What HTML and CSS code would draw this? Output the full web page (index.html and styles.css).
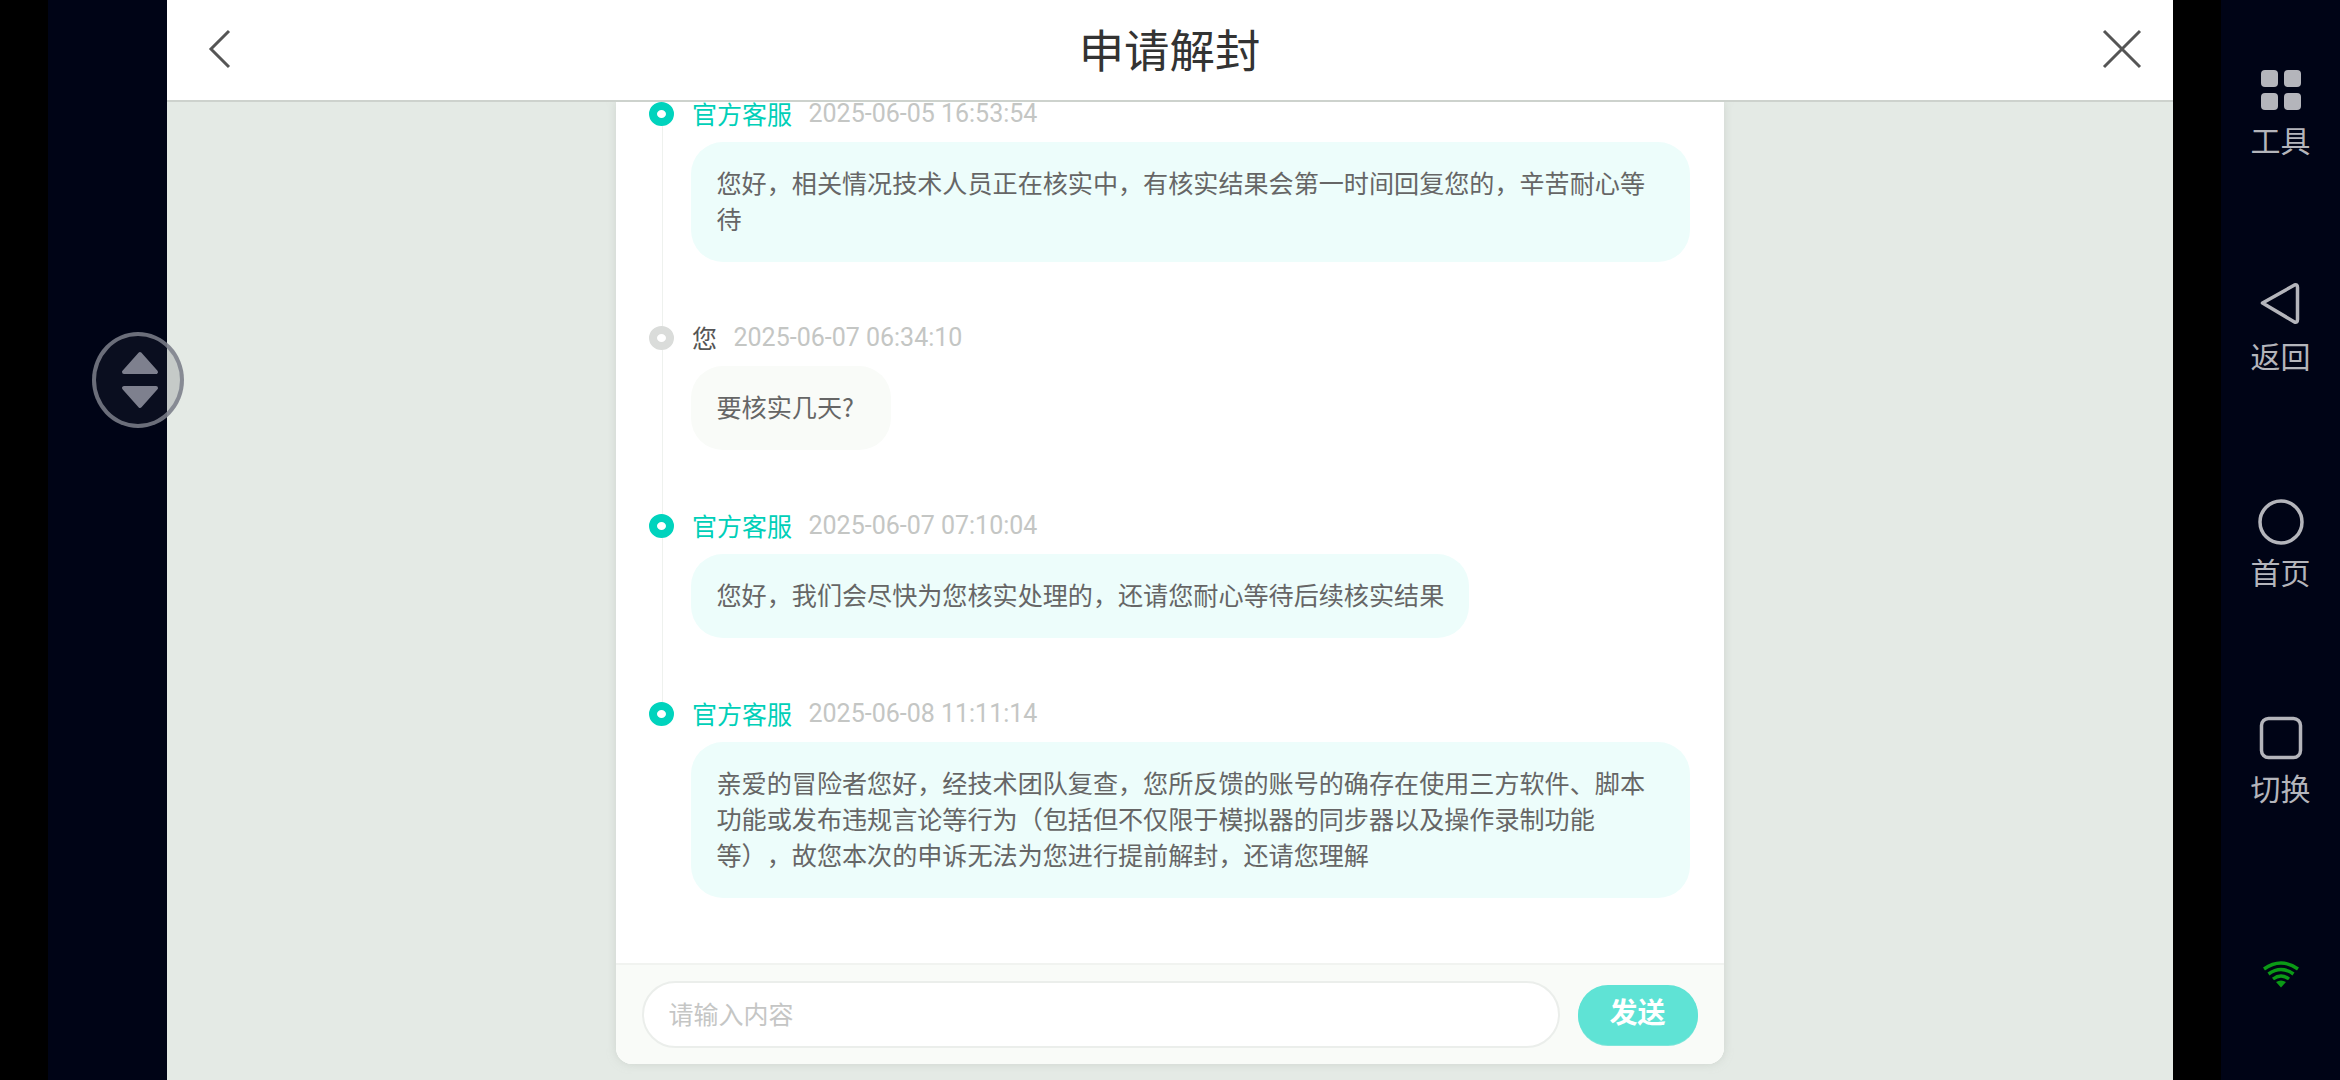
FILE: index.html
```html
<!DOCTYPE html>
<html lang="zh-CN">
<head>
<meta charset="utf-8">
<title>申请解封</title>
<link rel="stylesheet" href="styles.css">
</head>
<body>
<div class="screen">
  <aside class="side-left"><div class="cutout"></div><div class="navy"></div></aside>
  <main class="app">
    <header class="topbar">
      <svg class="top-icon" width="36" height="40" viewBox="0 0 36 40"><path d="M22 2 L4 20 L22 38" fill="none" stroke="#555" stroke-width="3"/></svg>
      <h1 class="title">申请解封</h1>
      <svg class="top-icon" width="40" height="40" viewBox="0 0 40 40"><path d="M2 2 L38 38 M38 2 L2 38" fill="none" stroke="#555" stroke-width="3"/></svg>
    </header>
    <section class="stage">
      <div class="card">
        <div class="scroll">
          <div class="list">
            <article class="msg staff">
              <div class="meta"><span class="dot"></span><span class="name">官方客服</span><span class="time">2025-06-05 16:53:54</span></div>
              <p class="bubble">您好，相关情况技术人员正在核实中，有核实结果会第一时间回复您的，辛苦耐心等待</p>
            </article>
            <article class="msg user">
              <div class="meta"><span class="dot"></span><span class="name">您</span><span class="time">2025-06-07 06:34:10</span></div>
              <p class="bubble">要核实几天?</p>
            </article>
            <article class="msg staff">
              <div class="meta"><span class="dot"></span><span class="name">官方客服</span><span class="time">2025-06-07 07:10:04</span></div>
              <p class="bubble">您好，我们会尽快为您核实处理的，还请您耐心等待后续核实结果</p>
            </article>
            <article class="msg staff last">
              <div class="meta"><span class="dot"></span><span class="name">官方客服</span><span class="time">2025-06-08 11:11:14</span></div>
              <p class="bubble">亲爱的冒险者您好，经技术团队复查，您所反馈的账号的确存在使用三方软件、脚本功能或发布违规言论等行为（包括但不仅限于模拟器的同步器以及操作录制功能<br>等），故您本次的申诉无法为您进行提前解封，还请您理解</p>
            </article>
          </div>
        </div>
        <footer class="composer">
          <input class="field" type="text" placeholder="请输入内容">
          <button class="send" type="button">发送</button>
        </footer>
      </div>
    </section>
  </main>
  <aside class="side-right">
    <div class="cutout"></div>
    <nav class="rail">
      <div class="rail-item">
        <svg class="rail-icon" width="46" height="46" viewBox="0 0 46 46"><g fill="#b4b5bb"><rect x="3" y="3" width="17" height="17" rx="4"/><rect x="26" y="3" width="17" height="17" rx="4"/><rect x="3" y="26" width="17" height="17" rx="4"/><rect x="26" y="26" width="17" height="17" rx="4"/></g></svg>
        <span class="rail-label">工具</span>
      </div>
      <div class="rail-item">
        <svg class="rail-icon" width="46" height="46" viewBox="0 0 46 46"><path d="M4.5 20 L36.5 2 Q39.5 1 39.5 4.5 L39.5 36.5 Q39.5 40 36.5 39 L4.5 20 Z" fill="none" stroke="#b4b5bb" stroke-width="3.5" stroke-linejoin="round"/></svg>
        <span class="rail-label">返回</span>
      </div>
      <div class="rail-item">
        <svg class="rail-icon" width="46" height="46" viewBox="0 0 46 46"><circle cx="23" cy="23" r="21" fill="none" stroke="#b4b5bb" stroke-width="3.5"/></svg>
        <span class="rail-label">首页</span>
      </div>
      <div class="rail-item">
        <svg class="rail-icon" width="46" height="46" viewBox="0 0 46 46"><rect x="3.5" y="3.5" width="39" height="39" rx="7" fill="none" stroke="#b4b5bb" stroke-width="3.5"/></svg>
        <span class="rail-label">切换</span>
      </div>
      <svg class="wifi" width="38" height="28" viewBox="0 0 38 28"><g fill="none" stroke="#0b9a16" stroke-width="3.4"><path d="M2 9 Q19 -3 36 9"/><path d="M6.5 14 Q19 5 31.5 14"/><path d="M11 19 Q19 13 27 19"/></g><path d="M14 22 Q19 19 24 22 L19 27.5 Z" fill="#0b9a16"/></svg>
    </nav>
  </aside>
  <div class="float-btn">
    <svg width="38" height="58" viewBox="0 0 38 58"><g fill="#7e808e" stroke="#7e808e" stroke-width="4" stroke-linejoin="round"><path d="M19 3 L35 21 L3 21 Z"/><path d="M3 37 L35 37 L19 55 Z"/></g></svg>
  </div>
</div>
</body>
</html>
```
FILE: styles.css
```css
* { box-sizing: border-box; }
html, body { margin: 0; padding: 0; height: 100%; overflow: hidden; background: #000; }
body { font-family: "Noto Sans CJK SC", "Noto Sans", sans-serif; }
.screen { position: relative; display: flex; width: 2340px; height: 1080px; }

.side-left { display: flex; width: 167px; flex: none; }
.side-right { display: flex; width: 167px; flex: none; }
.cutout { width: 48px; flex: none; background: #000; }
.navy { flex: 1; background: #000416; }

.app { flex: 1; display: flex; flex-direction: column; background: #e4eae5; min-width: 0; }
.topbar {
  height: 102px; flex: none; display: flex; align-items: center; justify-content: space-between;
  padding: 0 31px 3px 40px; background: #fff; border-bottom: 2px solid #cdd2cd; position: relative; z-index: 2;
}
.title { margin: 0; font-size: 45.4px; font-weight: 400; line-height: 1; color: #333; position: relative; left: -3px; }
.top-icon { flex: none; }

.stage { flex: 1; display: flex; justify-content: center; min-height: 0; padding-bottom: 16px; }
.card {
  width: 1108px; margin-left: -1px; display: flex; flex-direction: column; background: #fff;
  border-radius: 0 0 16px 16px; box-shadow: 0 0 8px rgba(190, 196, 190, .6);
}
.scroll { flex: 1; min-height: 0; }
.list { margin-top: -6px; padding: 0 34px 0 33px; }

.msg { position: relative; padding-bottom: 58px; padding-left: 42px; }
.msg::before { content: ""; position: absolute; left: 13px; top: 18px; bottom: -18px; width: 1px; background: #eef1ee; }
.msg.last { padding-bottom: 0; }
.msg.last::before { display: none; }

.meta { display: flex; align-items: center; height: 36px; margin-bottom: 10px; white-space: nowrap; }
.dot {
  position: absolute; left: 0; top: 6px; width: 25px; height: 24px; border-radius: 50%;
  border: 8px solid #00d3bd; background: #fff;
}
.name { font-size: 25px; line-height: 22px; margin: 0 16.5px 2px 1.5px; }
.time { font-family: Roboto, sans-serif; font-size: 25px; line-height: 24px; color: #c4c6c4; }
.staff .name { color: #00cfb8; }
.user .name { color: #555; }
.user .dot { border-color: #dadcda; }

.bubble {
  width: fit-content; min-width: 200px; margin: 0; padding: 22px 25px 26px 26px; max-width: 999px; border-radius: 32px;
  font-size: 25.1px; line-height: 36px; color: #666; background: #edfdfb; text-spacing-trim: space-all;
}
.user .bubble { background: #f9fbf8; }

.composer {
  height: 101px; flex: none; display: flex; align-items: center; gap: 18px; padding: 0 26px 0 26px;
  background: #f9fbf8; border-top: 2px solid #f1f3f0; border-radius: 0 0 16px 16px;
}
.field {
  width: 918px; height: 67px; padding: 0 26px 3px 25px; border: 2px solid #ebeeeb; border-radius: 34px;
  background: #fff; font: inherit; font-size: 25px; color: #666; outline: none;
}
.field::placeholder { color: #c5c6c5; opacity: 1; }
.send {
  width: 120px; height: 60px; padding: 0 0 8px; border: 0; border-radius: 30px; background: #5fe3d5;
  box-shadow: 0 1px 0 #7fe6da; font: inherit; font-size: 28px; font-weight: 700; color: #fff;
}

.rail { flex: 1; display: flex; flex-direction: column; align-items: center; gap: 122px; padding-top: 67px; background: #000416; }
.rail-item { display: flex; flex-direction: column; align-items: center; height: 94px; }
.rail-icon { display: block; flex: none; }
.rail-label { margin-top: 6px; font-size: 30px; line-height: 40px; color: #b4b5bb; white-space: nowrap; }
.wifi { margin-top: 29px; flex: none; }

.float-btn {
  position: absolute; left: 92px; top: 332px; width: 92px; height: 96px; border-radius: 50%;
  border: 4px solid rgba(125, 128, 140, .85); background: rgba(55, 60, 70, .18);
  display: flex; align-items: center; justify-content: center; padding-left: 3px;
}
```
